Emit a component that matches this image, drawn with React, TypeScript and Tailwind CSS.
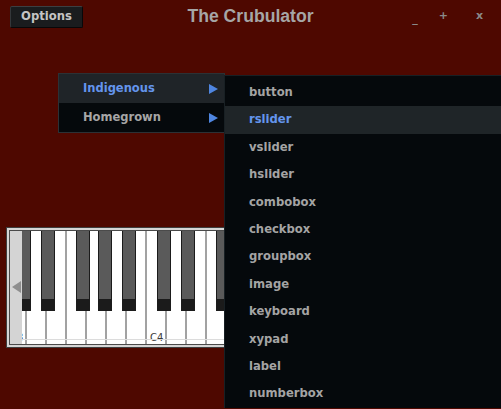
import { useState } from "react";

const SUB_ITEMS = [
  "button",
  "rslider",
  "vslider",
  "hslider",
  "combobox",
  "checkbox",
  "groupbox",
  "image",
  "keyboard",
  "xypad",
  "label",
  "numberbox",
];

const MAIN_ITEMS = ["Indigenous", "Homegrown"];

// black key offsets within an octave (px from the C key's left edge)
const BLACK_OFFSETS = [10, 34, 69, 91, 115];

function Keyboard() {
  const whiteKeys = Array.from({ length: 21 }, (_, i) => i);
  const octaves = [0, 1, 2];

  return (
    <div className="ml-[6px] mt-[199px] h-[121px] w-[400px] border border-[#3e3e3e] bg-[#d6d6d6] p-[2px]">
      <div className="relative h-full w-full overflow-hidden border border-[#4a4a4a] bg-white">
        <div className="ml-[-3px] flex h-full">
          {whiteKeys.map((i) => (
            <div
              key={i}
              className="relative h-full w-[20px] shrink-0 border-r-2 border-[#a2a2a2] bg-white"
            >
              {i % 7 === 0 ? (
                <span className="absolute bottom-[-1px] left-[3px] text-[10px] leading-[14px] text-[#3a3a3a] [font-family:'DejaVu_Sans',sans-serif]">
                  C{3 + i / 7}
                </span>
              ) : null}
            </div>
          ))}
        </div>
        <div className="absolute bottom-[4px] left-0 h-px w-full bg-[#dcdcdc]" />
        {octaves.map((o) =>
          BLACK_OFFSETS.map((off) => (
            <div
              key={`${o}-${off}`}
              className="absolute top-0 flex h-[80px] w-[14px] flex-col border-x border-[#1b1b1b] bg-[#5a5a5a]"
              style={{ left: -3 + o * 140 + off }}
            >
              <div className="mt-auto h-[12px] bg-[#1b1b1b]" />
            </div>
          ))
        )}
        <div className="absolute left-0 top-0 flex h-full w-[12px] items-center justify-center bg-[#d4d4d4]">
          <div className="mt-[-2px] h-0 w-0 border-y-[6px] border-r-[9px] border-y-transparent border-r-[#8e8e8e]" />
        </div>
      </div>
    </div>
  );
}

export default function App() {
  const [openMain] = useState(0);
  const [hoverSub] = useState(1);

  return (
    <div className="relative h-[409px] w-[501px] overflow-hidden bg-[#4e0800] [font-family:'DejaVu_Sans',sans-serif]">
      <div className="relative flex h-[28px] items-start">
        <button className="ml-[10px] mt-[6px] flex h-[22px] w-[73px] items-center justify-center rounded-[2px] border border-t-[#3c3f42] border-l-[#34373a] border-r-[#070809] border-b-[#070809] bg-[#1a1c1e] text-[11.6px] font-bold text-[#c4c4c4]">
          Options
        </button>
        <div className="absolute left-0 right-0 top-[5px] text-center text-[17.6px] font-bold leading-[22px] text-[#a6a6a6] [font-family:'Liberation_Sans',Arial,sans-serif]">
          The Crubulator
        </div>
        <div className="ml-auto mr-[18px] mt-[9px] flex items-start text-[11px] font-bold leading-[14px] text-[#8a8a8a]">
          <span className="mr-[21px] mt-[3px]">_</span>
          <span className="mr-[28px]">+</span>
          <span>x</span>
        </div>
      </div>

      <Keyboard />

      <div className="absolute left-[58px] top-[73px] w-[167px] border border-[#2c3135] bg-[#05090c]">
        {MAIN_ITEMS.map((item, i) => (
          <div
            key={item}
            className={
              "flex h-[29px] items-center justify-between pl-[24px] pr-[6px] text-[11.5px] font-bold " +
              (i === openMain ? "bg-[#1f2428] text-[#6495ed]" : "text-[#a6a6a6]")
            }
          >
            <span>{item}</span>
            <span className="h-0 w-0 border-y-[5px] border-l-[9px] border-y-transparent border-l-[#4f86e0]" />
          </div>
        ))}
      </div>

      <div className="absolute left-[224px] top-[75px] w-[290px] border-l border-t border-[#182024] bg-[#05090c] pt-[3px]">
        {SUB_ITEMS.map((item, i) => (
          <div
            key={item}
            className={
              "flex h-[27.4px] items-center pl-[24px] text-[11.6px] font-bold " +
              (i === hoverSub ? "bg-[#1f2528] text-[#6495ed]" : "text-[#a4a4a4]")
            }
          >
            {item}
          </div>
        ))}
      </div>
    </div>
  );
}
